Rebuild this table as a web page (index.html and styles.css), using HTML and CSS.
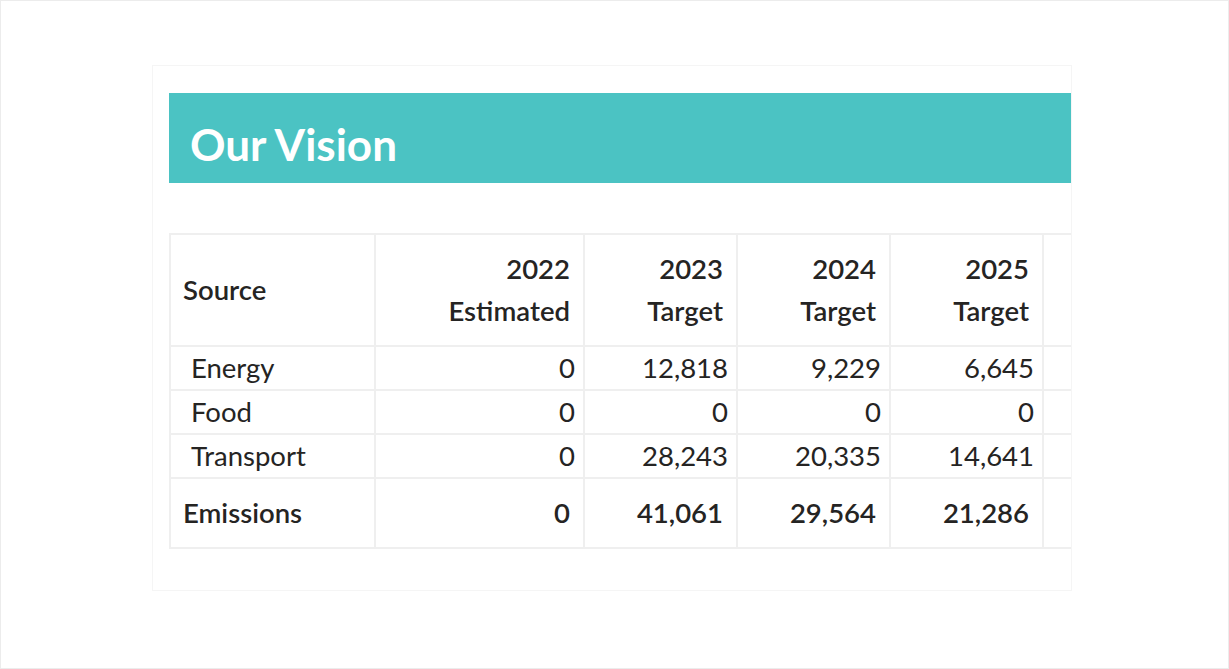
FILE: index.html
```html
<!DOCTYPE html>
<html lang="en">
<head>
<meta charset="utf-8">
<title>Our Vision</title>
<link rel="stylesheet" href="styles.css">
</head>
<body>
<div class="frame">
  <section class="card">
    <h1 class="banner">Our Vision</h1>
    <table class="matrix">
      <colgroup>
        <col class="c-source">
        <col class="c-2022">
        <col class="c-year">
        <col class="c-year">
        <col class="c-year">
        <col class="c-year">
      </colgroup>
      <thead>
        <tr>
          <th class="src">Source</th>
          <th class="num"><span class="l">2022</span><span class="l">Estimated</span></th>
          <th class="num"><span class="l">2023</span><span class="l">Target</span></th>
          <th class="num"><span class="l">2024</span><span class="l">Target</span></th>
          <th class="num"><span class="l">2025</span><span class="l">Target</span></th>
          <th class="num"></th>
        </tr>
      </thead>
      <tbody>
        <tr class="row">
          <td class="src">Energy</td>
          <td class="num">0</td>
          <td class="num">12,818</td>
          <td class="num">9,229</td>
          <td class="num">6,645</td>
          <td class="num"></td>
        </tr>
        <tr class="row">
          <td class="src">Food</td>
          <td class="num">0</td>
          <td class="num">0</td>
          <td class="num">0</td>
          <td class="num">0</td>
          <td class="num"></td>
        </tr>
        <tr class="row">
          <td class="src">Transport</td>
          <td class="num">0</td>
          <td class="num">28,243</td>
          <td class="num">20,335</td>
          <td class="num">14,641</td>
          <td class="num"></td>
        </tr>
        <tr class="total">
          <td class="src">Emissions</td>
          <td class="num">0</td>
          <td class="num">41,061</td>
          <td class="num">29,564</td>
          <td class="num">21,286</td>
          <td class="num"></td>
        </tr>
      </tbody>
    </table>
  </section>
</div>
</body>
</html>
```

FILE: styles.css
```css
* { box-sizing: border-box; }

html, body {
  margin: 0;
  padding: 0;
  background: #ffffff;
}

body {
  font-family: Lato, "Open Sans", "Liberation Sans", sans-serif;
  color: #252423;
}

.frame {
  width: 1229px;
  height: 669px;
  border: 1px solid #ececec;
  padding: 64px 0 0 151px;
  overflow: hidden;
}

.card {
  width: 920px;
  height: 526px;
  border: 1px solid #f5f5f5;
  padding: 27px 0 0 16px;
  overflow: hidden;
}

.banner {
  margin: 0;
  height: 90px;
  padding: 24px 0 0 21px;
  background: #4bc3c3;
  color: #ffffff;
  font-size: 44px;
  font-weight: 700;
  line-height: 54px;
  white-space: nowrap;
}

.matrix {
  margin-top: 50px;
  border-collapse: collapse;
  table-layout: fixed;
  width: 1027px;
  font-size: 27.5px;
  line-height: 42px;
}

.c-source { width: 205px; }
.c-2022 { width: 209px; }
.c-year { width: 153px; }

.matrix th,
.matrix td {
  border: 2px solid #efefef;
  white-space: nowrap;
  overflow: hidden;
  vertical-align: middle;
}

.matrix th {
  font-weight: 600;
  padding: 13px 13px 13px 12px;
}

.matrix .l { display: block; }

.matrix th.src { text-align: left; }
.num { text-align: right; }

.row td {
  padding: 0 8px 0 20px;
  height: 44px;
  font-weight: 400;
}

.total td {
  padding: 13px 13px 13px 12px;
  font-weight: 600;
}
```
